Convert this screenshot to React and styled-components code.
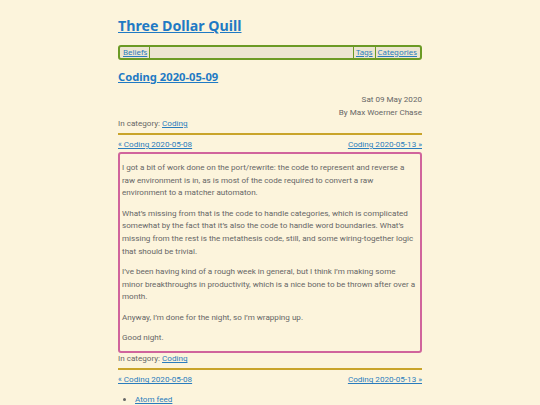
import React from "react";
import styled, { createGlobalStyle } from "styled-components";

const GlobalStyle = createGlobalStyle`
  html, body {
    margin: 0;
    padding: 0;
    background: #fcf4dc;
  }
  a {
    color: #2a7cbd;
  }
`;

const Page = styled.div`
  width: 304px;
  margin: 0 auto;
  padding-top: 15px;
  font-family: Roboto, "DejaVu Sans", sans-serif;
  font-size: 8.1px;
  line-height: 12.4px;
  color: #666;
`;

const SiteTitle = styled.h1`
  margin: 0;
  font-family: "Noto Sans", "Open Sans", sans-serif;
  font-size: 14.2px;
  line-height: 21px;
  font-weight: 700;

  a {
    color: #1f7ac4;
  }
`;

const Nav = styled.nav`
  display: flex;
  margin-top: 9px;
  height: 11px;
  border: 2px solid #6b9a25;
  border-radius: 3px;
  background: #ece5d1;
  font-family: "Noto Sans", "Open Sans", sans-serif;
  font-size: 7.8px;
  line-height: 11px;
  padding: 0 1px;
`;

const NavLink = styled.a`
  padding: 0 2px;
  border-left: ${(p) => (p.$left ? "1.5px solid #6b9a25" : "none")};
  border-right: ${(p) => (p.$right ? "1.5px solid #6b9a25" : "none")};
`;

const Spacer = styled.div`
  flex: 1;
`;

const PostTitle = styled.h2`
  margin: 9px 0 0;
  font-family: "Noto Sans", "Open Sans", sans-serif;
  font-size: 11.2px;
  line-height: 15px;
  font-weight: 700;

  a {
    color: #1f7ac4;
  }
`;

const Meta = styled.div`
  margin-top: 9px;
  text-align: right;
  line-height: 12.5px;
`;

const Category = styled.div`
  line-height: 11px;
`;

const Rule = styled.hr`
  margin: 4px 0 0;
  border: none;
  border-top: 2px solid #c9a42a;
`;

const PostNav = styled.div`
  display: flex;
  justify-content: space-between;
  margin-top: 4px;
  line-height: 11px;
`;

const Article = styled.article`
  margin-top: 1.5px;
  border: 2px solid #d0649c;
  border-radius: 3px;
  padding: 0 2px;
  line-height: 12.6px;

  p {
    margin: 7.8px 0;
  }
`;

const FooterList = styled.ul`
  margin: 8px 0 0;
  padding-left: 17px;
  line-height: 12px;
`;

const paragraphs = [
  "I got a bit of work done on the port/rewrite: the code to represent and reverse a raw environment is in, as is most of the code required to convert a raw environment to a matcher automaton.",
  "What\u2019s missing from that is the code to handle categories, which is complicated somewhat by the fact that it\u2019s also the code to handle word boundaries. What\u2019s missing from the rest is the metathesis code, still, and some wiring-together logic that should be trivial.",
  "I\u2019ve been having kind of a rough week in general, but I think I\u2019m making some minor breakthroughs in productivity, which is a nice bone to be thrown after over a month.",
  "Anyway, I\u2019m done for the night, so I\u2019m wrapping up.",
  "Good night.",
];

const Neighbours = () => (
  <PostNav>
    <a href="#">« Coding 2020-05-08</a>
    <a href="#">Coding 2020-05-13 »</a>
  </PostNav>
);

export default function App() {
  return (
    <>
      <GlobalStyle />
      <Page>
        <SiteTitle>
          <a href="#">Three Dollar Quill</a>
        </SiteTitle>
        <Nav>
          <NavLink href="#" $right>
            Beliefs
          </NavLink>
          <Spacer />
          <NavLink href="#" $left>
            Tags
          </NavLink>
          <NavLink href="#" $left>
            Categories
          </NavLink>
        </Nav>
        <PostTitle>
          <a href="#">Coding 2020-05-09</a>
        </PostTitle>
        <Meta>
          <div>Sat 09 May 2020</div>
          <div>By Max Woerner Chase</div>
        </Meta>
        <Category>
          In category: <a href="#">Coding</a>
        </Category>
        <Rule />
        <Neighbours />
        <Article>
          {paragraphs.map((text, i) => (
            <p key={i}>{text}</p>
          ))}
        </Article>
        <Category>
          In category: <a href="#">Coding</a>
        </Category>
        <Rule />
        <Neighbours />
        <FooterList>
          <li>
            <a href="#">Atom feed</a>
          </li>
        </FooterList>
      </Page>
    </>
  );
}
